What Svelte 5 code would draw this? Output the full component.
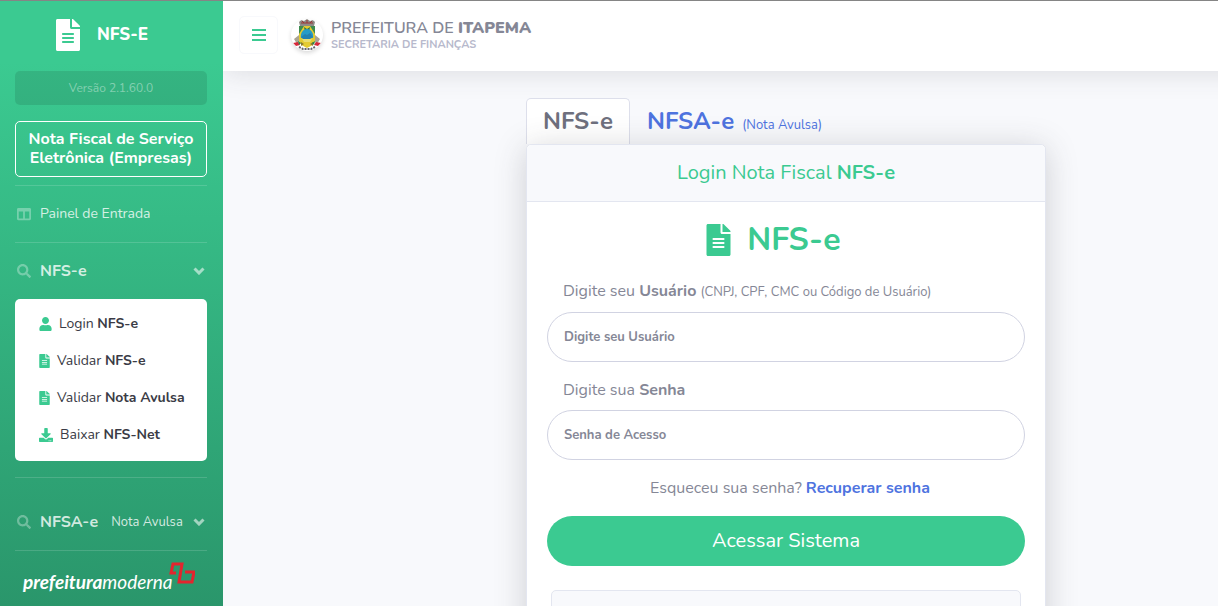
<script lang="ts">
  interface MenuItem {
    icon: 'user' | 'file' | 'download';
    label: string;
    strong: string;
  }

  const menuItems: MenuItem[] = [
    { icon: 'user', label: 'Login', strong: 'NFS-e' },
    { icon: 'file', label: 'Validar', strong: 'NFS-e' },
    { icon: 'file', label: 'Validar', strong: 'Nota Avulsa' },
    { icon: 'download', label: 'Baixar', strong: 'NFS-Net' }
  ];

  let sidebarOpen = $state(true);
  let nfseOpen = $state(true);
  let usuario = $state('');
  let senha = $state('');
</script>

{#snippet fileIcon()}
  <svg class="icon-file" viewBox="0 0 384 512" aria-hidden="true">
    <path d="M224 136V0H24C10.700 0 0 10.700 0 24v464c0 13.300 10.700 24 24 24h336c13.300 0 24-10.700 24-24V160H248c-13.200 0-24-10.800-24-24zm64 236c0 6.600-5.400 12-12 12H108c-6.600 0-12-5.400-12-12v-8c0-6.600 5.400-12 12-12h168c6.600 0 12 5.400 12 12v8zm0-64c0 6.600-5.400 12-12 12H108c-6.600 0-12-5.400-12-12v-8c0-6.600 5.400-12 12-12h168c6.600 0 12 5.400 12 12v8zm0-72v8c0 6.600-5.400 12-12 12H108c-6.600 0-12-5.400-12-12v-8c0-6.600 5.400-12 12-12h168c6.600 0 12 5.400 12 12zm96-114.100v6.100H256V0h6.100c6.400 0 12.500 2.500 17 7l97.900 98c4.500 4.500 7 10.600 7 16.900z" />
  </svg>
{/snippet}

{#snippet searchIcon()}
  <svg class="icon-nav" viewBox="0 0 512 512" aria-hidden="true">
    <path d="M505 442.700L405.300 343c-4.500-4.500-10.600-7-17-7H372c27.600-35.300 44-79.700 44-128C416 93.100 322.900 0 208 0S0 93.100 0 208s93.100 208 208 208c48.300 0 92.700-16.400 128-44v16.300c0 6.400 2.500 12.500 7 17l99.700 99.700c9.400 9.400 24.600 9.400 33.900 0l28.300-28.300c9.400-9.400 9.400-24.600.100-34zM208 336c-70.700 0-128-57.200-128-128 0-70.700 57.200-128 128-128 70.700 0 128 57.200 128 128 0 70.700-57.200 128-128 128z" />
  </svg>
{/snippet}

{#snippet chevron()}
  <svg class="icon-chevron" viewBox="0 0 12 8" aria-hidden="true">
    <path d="M1.500 1.500 6 6l4.500-4.500" />
  </svg>
{/snippet}

<div class="wrapper">
  {#if sidebarOpen}
    <nav class="sidebar">
      <a class="brand" href="#inicio">
        {@render fileIcon()}
        <span>NFS-E</span>
      </a>
      <div class="version">Versão 2.1.60.0</div>
      <div class="system">Nota Fiscal de Serviço Eletrônica (Empresas)</div>

      <a class="nav-link panel-link" href="#painel">
        <svg class="icon-nav" viewBox="0 0 512 512" aria-hidden="true">
          <path d="M464 32H48C21.500 32 0 53.500 0 80v352c0 26.500 21.500 48 48 48h416c26.500 0 48-21.500 48-48V80c0-26.500-21.500-48-48-48zM224 416H64V160h160v256zm224 0H288V160h160v256z" />
        </svg>
        <span>Painel de Entrada</span>
      </a>

      <div class="nav-group">
        <button class="nav-link" aria-expanded={nfseOpen} onclick={() => (nfseOpen = !nfseOpen)}>
          {@render searchIcon()}
          <strong>NFS-e</strong>
          {@render chevron()}
        </button>
        {#if nfseOpen}
          <ul class="submenu">
            {#each menuItems as item}
              <li>
                <a href="#nfse">
                  {#if item.icon === 'user'}
                    <svg class="icon-user" viewBox="0 0 448 512" aria-hidden="true">
                      <path d="M224 256c70.700 0 128-57.300 128-128S294.700 0 224 0 96 57.300 96 128s57.300 128 128 128zm89.600 32h-16.700c-22.200 10.200-46.900 16-72.900 16s-50.600-5.800-72.900-16h-16.700C60.200 288 0 348.200 0 422.400V464c0 26.500 21.500 48 48 48h352c26.500 0 48-21.500 48-48v-41.600c0-74.200-60.200-134.400-134.400-134.400z" />
                    </svg>
                  {:else if item.icon === 'file'}
                    {@render fileIcon()}
                  {:else}
                    <svg class="icon-download" viewBox="0 0 512 512" aria-hidden="true">
                      <path d="M216 0h80c13.300 0 24 10.700 24 24v168h87.700c17.800 0 26.700 21.500 14.100 34.100L269.700 378.300c-7.500 7.500-19.800 7.500-27.300 0L90.100 226.100c-12.600-12.600-3.700-34.100 14.100-34.100H192V24c0-13.300 10.700-24 24-24zm296 376v112c0 13.300-10.700 24-24 24H24c-13.300 0-24-10.700-24-24V376c0-13.300 10.700-24 24-24h146.700l49 49c20.100 20.100 52.500 20.100 72.600 0l49-49H488c13.300 0 24 10.700 24 24zm-124 88c0-11-9-20-20-20s-20 9-20 20 9 20 20 20 20-9 20-20zm64 0c0-11-9-20-20-20s-20 9-20 20 9 20 20 20 20-9 20-20z" />
                    </svg>
                  {/if}
                  <span>{item.label} <b>{item.strong}</b></span>
                </a>
              </li>
            {/each}
          </ul>
        {/if}
      </div>

      <button class="nav-link avulsa-link">
        {@render searchIcon()}
        <strong>NFSA-e</strong>
        <span class="hint">Nota Avulsa</span>
        {@render chevron()}
      </button>

      <a class="company" href="#prefeituramoderna">
        <span><b>prefeitura</b>moderna</span>
        <svg viewBox="0 0 26 22" aria-hidden="true">
          <path d="M7 11H2L4 2h9l-3 18h13l2-10h-9" />
        </svg>
      </a>
    </nav>
  {/if}

  <div class="content">
    <header class="topbar">
      <button class="toggle" aria-label="Menu" onclick={() => (sidebarOpen = !sidebarOpen)}>
        <svg viewBox="0 0 14 12" aria-hidden="true">
          <path d="M0 1h14M0 6h14M0 11h14" />
        </svg>
      </button>
      <svg class="crest" viewBox="0 0 32 32" role="img" aria-label="Brasão de Itapema">
        <path d="M8 3l2-2 3 1 3-2 3 2 3-1 2 2-1 4H9z" fill="#8f8b86" />
        <path d="M10 4h12M11 2l2 2M16 1v3M21 2l-2 2" stroke="#9d3434" />
        <path d="M3 20l5-4 2 5-4 4zM29 20l-5-4-2 5 4 4z" fill="#aaa393" />
        <path d="M8 7h16v14c0 4-4 6-8 8-4-2-8-4-8-8z" fill="#e4cb31" />
        <path d="M8 7h5l-5 8zM24 7h-5l5 8z" fill="#3e8c50" />
        <path d="M13 8l3 2 3-2-1 5h-4z" fill="#2f7647" />
        <path d="M10 19c-1-5 2-9 6-9s7 4 6 9z" fill="#279bc7" />
        <path d="M10 18l4-3 2 1 3-2 3 4-3 2h-7z" fill="#2481b1" />
        <path d="M11 20h10l-2 3h-6z" fill="#e8dd72" />
        <path d="M10 23l3 2-3 2zM22 23l-3 2 3 2z" fill="#8b7930" />
        <path d="M2 24l5-1 2 3-4 1z" fill="#d7273a" />
        <path d="M7 22l3 2-2 2z" fill="#268647" />
        <path d="M30 24l-5-1-2 3 4 1z" fill="#d7273a" />
        <path d="M24 22l-3 2 2 2z" fill="#268647" />
        <path d="M8 28l4 2h8l4-2" fill="none" stroke="#65656a" stroke-width="2" stroke-dasharray="2 1" />
      </svg>
      <div class="org">
        <span class="org-name">PREFEITURA DE <b>ITAPEMA</b></span>
        <span class="org-unit">SECRETARIA DE FINANÇAS</span>
      </div>
    </header>

    <main>
      <section class="login">
        <div class="tabs">
          <a class="tab active" href="#nfse"><b>NFS-e</b></a>
          <a class="tab" href="#nfsae"><b>NFSA-e</b><small>(Nota Avulsa)</small></a>
        </div>
        <div class="card">
          <h2>Login Nota Fiscal <b>NFS-e</b></h2>
          <form onsubmit={(e) => e.preventDefault()}>
            <h1>{@render fileIcon()}<span>NFS-e</span></h1>
            <label for="usuario">
              Digite seu <b>Usuário</b> <small>(CNPJ, CPF, CMC ou Código de Usuário)</small>
            </label>
            <input id="usuario" type="text" placeholder="Digite seu Usuário" bind:value={usuario} />
            <label for="senha">Digite sua <b>Senha</b></label>
            <input id="senha" type="password" placeholder="Senha de Acesso" bind:value={senha} />
            <p>Esqueceu sua senha? <a href="#recuperar">Recuperar senha</a></p>
            <button class="submit" type="submit">Acessar Sistema</button>
            <div class="notice"></div>
          </form>
        </div>
      </section>
    </main>
  </div>
</div>

<style>
  :global(body) {
    background: #f8f9fc;
  }

  .wrapper {
    --green: #3bca91;
    --text: #858796;
    --border: #e3e6f0;
    box-sizing: border-box;
    display: flex;
    height: 100vh;
    overflow: hidden;
    border-top: 1px solid #858585;
    font-family: Nunito, Lato, sans-serif;
    font-size: 16px;
    line-height: 24px;
    color: var(--text);
  }

  .wrapper * {
    box-sizing: border-box;
  }

  a {
    color: inherit;
    text-decoration: none;
  }

  button,
  input {
    font-family: inherit;
  }

  button {
    cursor: pointer;
  }

  svg {
    flex-shrink: 0;
    fill: currentColor;
  }

  /* Sidebar */
  .sidebar {
    position: relative;
    z-index: 2;
    display: flex;
    flex-direction: column;
    flex: 0 0 223px;
    min-width: 0;
    padding: 0 16px 0 15px;
    background: linear-gradient(180deg, #3bca91 10%, #2a966b 100%);
    color: #fff;
  }

  .brand {
    display: flex;
    align-items: center;
    justify-content: center;
    gap: 16px;
    height: 70px;
    padding: 0 19px 2px 0;
    font-size: 17px;
    font-weight: 800;
  }

  .brand .icon-file {
    width: 26px;
    height: 32px;
  }

  .version {
    padding: 5px;
    border-radius: 5px;
    background: rgba(0, 0, 0, 0.1);
    color: rgba(255, 255, 255, 0.4);
    font-size: 12px;
    text-align: center;
  }

  .system {
    margin: 16px 0 8px;
    padding: 8px 4px;
    border: 1px solid #fff;
    border-radius: 5px;
    font-weight: 700;
    line-height: 19px;
    text-align: center;
  }

  .nav-link {
    display: flex;
    align-items: center;
    gap: 9px;
    width: 100%;
    height: 56px;
    padding: 0 2px;
    border: 0;
    background: none;
    color: rgba(255, 255, 255, 0.8);
    font-size: 14px;
    text-align: left;
  }

  .nav-link strong {
    font-size: 16px;
  }

  .panel-link,
  .nav-group,
  .avulsa-link,
  .company {
    border-top: 1px solid rgba(255, 255, 255, 0.15);
  }

  .panel-link {
    height: 57px;
  }

  .icon-nav {
    width: 14px;
    height: 14px;
    opacity: 0.4;
  }

  .icon-chevron {
    width: 12px;
    height: 8px;
    margin-left: auto;
    fill: none;
    stroke: currentColor;
    stroke-width: 3;
    opacity: 0.7;
  }

  .submenu {
    margin: 0 0 16px;
    padding: 7px 0 8px;
    border-radius: 5px;
    background: #fff;
    color: #3a3b45;
    font-size: 14px;
    list-style: none;
  }

  .submenu li + li {
    margin-top: 1px;
  }

  .submenu a {
    display: flex;
    align-items: center;
    gap: 7px;
    height: 36px;
    padding-left: 24px;
  }

  .submenu svg {
    height: 14px;
    color: var(--green);
  }

  .submenu .icon-user {
    width: 13px;
  }

  .submenu .icon-file {
    width: 11px;
  }

  .submenu .icon-download {
    width: 14px;
  }

  .avulsa-link {
    height: 73px;
    padding-top: 16px;
  }

  .hint {
    padding-left: 4px;
    font-size: 13px;
  }

  .company {
    display: flex;
    align-items: flex-start;
    padding: 11px 0 0 8px;
    font-family: Lato, sans-serif;
    font-size: 19px;
    font-style: italic;
  }

  .company span {
    padding-top: 8px;
  }

  .company svg {
    width: 26px;
    height: 22px;
    margin-left: -4px;
    fill: none;
    stroke: #e3252e;
    stroke-width: 3;
  }

  /* Topbar */
  .content {
    display: flex;
    flex-direction: column;
    flex: 1;
    min-width: 0;
  }

  /* runs past the right edge so its shadow does not fade there */
  .topbar {
    display: flex;
    align-items: center;
    flex-shrink: 0;
    height: 70px;
    margin-right: -48px;
    padding: 0 16px 2px;
    background: #fff;
    box-shadow: 0 2px 28px rgba(58, 59, 69, 0.15);
  }

  .toggle {
    display: grid;
    place-items: center;
    width: 39px;
    height: 38px;
    border: 1px solid #f8f9fc;
    border-radius: 5px;
    background: #fff;
    color: var(--green);
  }

  .toggle svg {
    width: 14px;
    height: 12px;
    stroke: currentColor;
    stroke-width: 2;
  }

  .crest {
    width: 32px;
    height: 32px;
    margin: 0 8px 0 13px;
    border-radius: 50%;
    box-shadow: 0 2px 4px rgba(0, 0, 0, 0.15);
  }

  .org {
    display: flex;
    flex-direction: column;
    font-weight: 600;
  }

  .org-name {
    line-height: 20px;
  }

  .org-name b {
    font-weight: 900;
  }

  .org-unit {
    color: #b7b9cc;
    font-size: 11px;
    font-weight: 700;
    line-height: 14px;
  }

  /* Login */
  main {
    display: grid;
    grid-template-columns: 303fr 520px 172fr;
    padding-top: 27px;
  }

  .login {
    grid-column: 2;
  }

  .tabs {
    display: flex;
  }

  .tab {
    display: flex;
    align-items: baseline;
    gap: 8px;
    height: 46px;
    padding: 6px 16px;
    border: 1px solid transparent;
    border-bottom: 0;
    border-radius: 5px 5px 0 0;
    color: #4e73df;
    font-size: 24px;
    line-height: 32px;
  }

  .tab.active {
    border-color: #dddfeb;
    background: #fff;
    color: #6e707e;
  }

  small {
    font-size: 13px;
  }

  .card {
    position: relative;
    border: 1px solid var(--border);
    border-radius: 5px;
    background: #fff;
    box-shadow: 0 4px 32px rgba(58, 59, 69, 0.22);
  }

  h2 {
    margin: 0;
    padding: 16px;
    border-bottom: 1px solid var(--border);
    border-radius: 5px 5px 0 0;
    background: #f8f9fc;
    color: var(--green);
    font-size: 20px;
    font-weight: 400;
    line-height: 24px;
    text-align: center;
  }

  form {
    display: flex;
    flex-direction: column;
    padding: 20px;
  }

  h1 {
    display: flex;
    align-items: center;
    justify-content: center;
    gap: 16px;
    margin: 0 0 21px;
    padding-right: 25px;
    color: var(--green);
    font-size: 32px;
    font-weight: 700;
    line-height: 36px;
  }

  h1 .icon-file {
    width: 25px;
    height: 32px;
  }

  label {
    margin: 0 0 8px 16px;
  }

  input {
    width: 100%;
    height: 50px;
    margin: 0 0 16px;
    padding: 0 16px;
    border: 1px solid #d1d3e2;
    border-radius: 25px;
    background: #fff;
    color: #6e707e;
    font-size: 13px;
    font-weight: 700;
  }

  input::placeholder {
    color: var(--text);
    opacity: 1;
  }

  p {
    margin: 0 0 16px;
    padding-left: 8px;
    text-align: center;
  }

  p a {
    color: #4e73df;
    font-weight: 700;
  }

  .submit {
    height: 50px;
    padding-bottom: 3px;
    border: 0;
    border-radius: 25px;
    background: var(--green);
    color: #fff;
    font-size: 20px;
  }

  .notice {
    height: 96px;
    margin: 24px 4px 0;
    border: 1px solid var(--border);
    border-radius: 5px;
    background: #f8f9fc;
  }
</style>
